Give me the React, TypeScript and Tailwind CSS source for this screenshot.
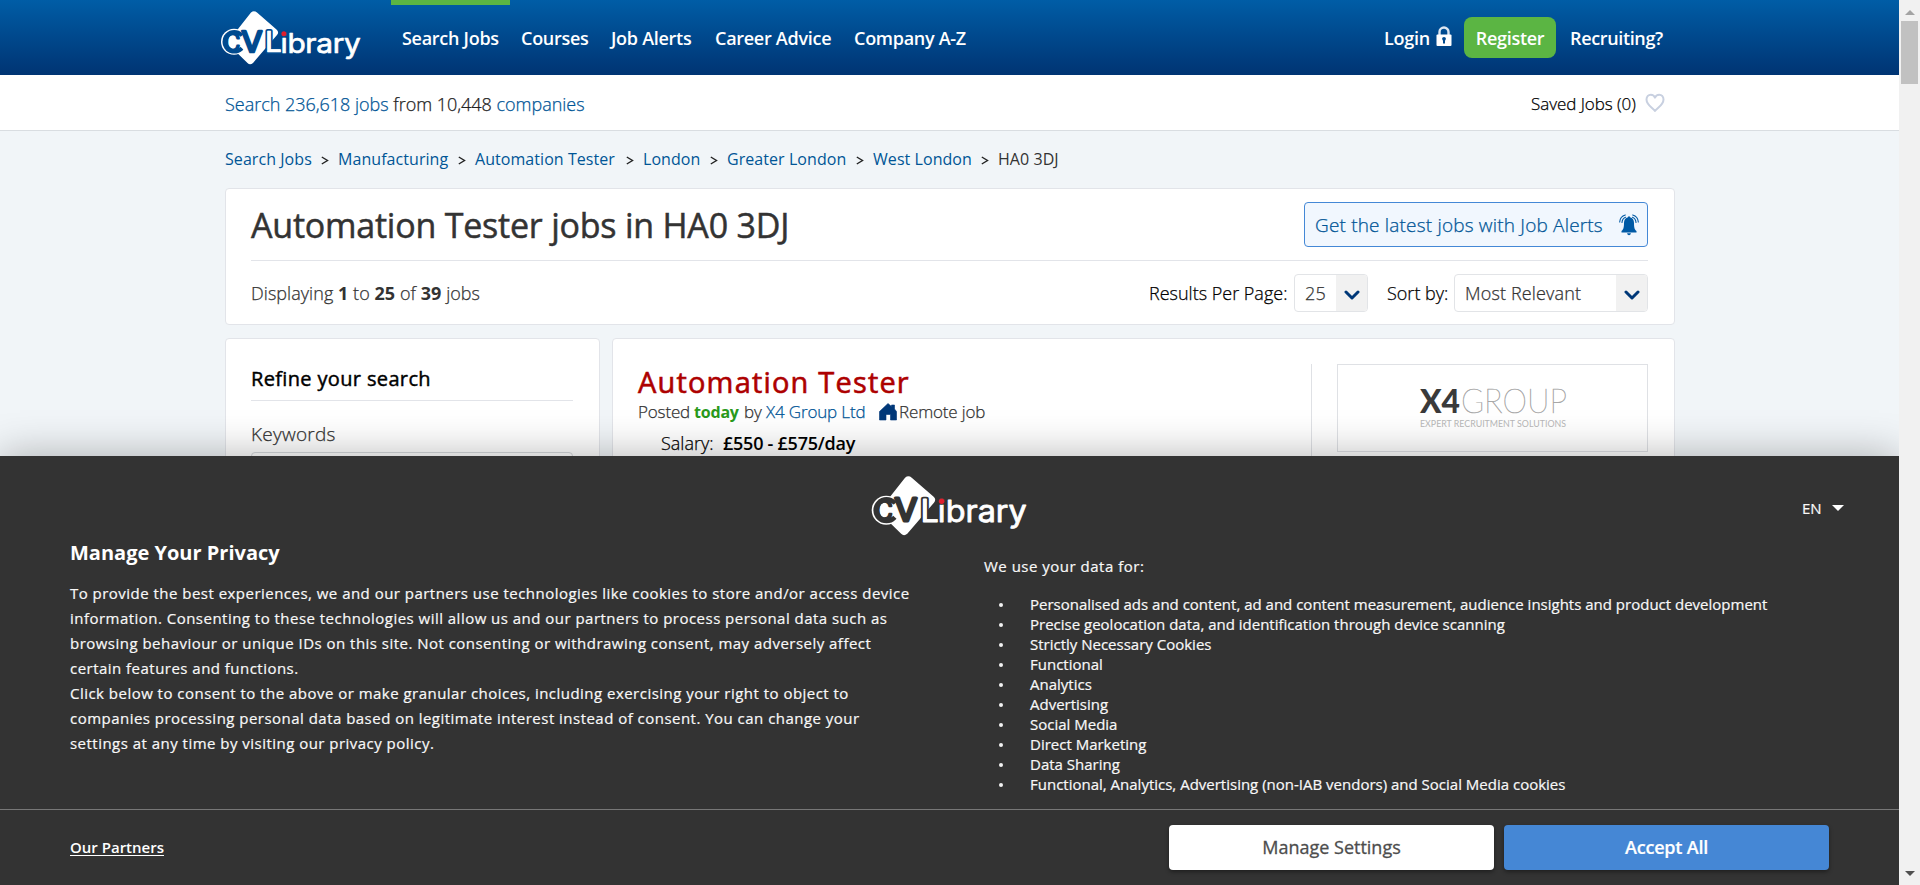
import React from "react";

const SANS = "font-['Open_Sans','Noto_Sans',sans-serif]";

function Logo({ className, ink }: { className: string; ink: string }) {
  return (
    <svg className={`overflow-visible ${className}`} viewBox="0 0 140 54" fill="none" aria-label="CV-Library">
      <path d="M30 1.500 Q33 -1 36 1.500 L55.500 18.500 Q58.500 21 56 24 L32 52 Q29 54.500 26.500 52 L6 32 Z" fill="#fff" />
      <circle cx="13" cy="30.800" r="13" fill="#fff" />
      <circle cx="13.300" cy="30.800" r="11.800" fill={ink} />
      <circle cx="14" cy="30.800" r="7.500" fill="#fff" />
      <path d="M14 30.800 L24 22 L28 31 L24 40 Z" fill="#fff" />
      <g fontFamily="Inter, 'Open Sans', sans-serif" strokeLinejoin="round" strokeLinecap="round" fontWeight="400">
        <text x="3" y="40.500" fontSize="27" textLength="16" lengthAdjust="spacingAndGlyphs" fill={ink} stroke={ink} strokeWidth="2">C</text>
        <text x="20.500" y="40.500" fontSize="28" textLength="20.500" lengthAdjust="spacingAndGlyphs" fill={ink} stroke={ink} strokeWidth="2.600">V</text>
        <text x="44" y="41" fontSize="28" textLength="16.500" lengthAdjust="spacingAndGlyphs" fill="#fff" stroke={ink} strokeWidth="4.200" paintOrder="stroke">L</text>
        <text x="44" y="41" fontSize="28" textLength="16.500" lengthAdjust="spacingAndGlyphs" fill="#fff" stroke="#fff" strokeWidth="0.700" aria-hidden="true">L</text>
        <text x="59.500" y="41.500" fontSize="27" textLength="80" lengthAdjust="spacingAndGlyphs" fill="#fff" stroke="#fff" strokeWidth="0.700">ibrary</text>
      </g>
      <circle cx="62.900" cy="22.800" r="3.100" fill={ink} />
      <circle cx="62.900" cy="22.800" r="2.500" fill="#e01f2d" />
    </svg>
  );
}

function Chevron() {
  return (
    <svg className="h-[12px] w-[16px]" viewBox="0 0 16 12" fill="none">
      <path d="M2 3 L8 9 L14 3" stroke="#003878" strokeWidth="3" strokeLinecap="round" strokeLinejoin="round" />
    </svg>
  );
}

function Header() {
  return (
    <header className="flex h-[75px] items-start bg-gradient-to-b from-[#005da6] to-[#003473] pl-[221px] text-[18px] font-semibold leading-[25px] tracking-[-0.28px] text-white">
      <Logo className="mt-[11px] h-[54px] w-[140px]" ink="#004a8f" />
      <nav className="ml-[30px] flex">
        <a className="h-[75px] w-[119px] border-t-[5px] border-[#5bb543] pl-[11px] pt-[21px] whitespace-nowrap">Search Jobs</a>
        <a className="w-[90px] pl-[11px] pt-[26px] whitespace-nowrap">Courses</a>
        <a className="w-[104px] pl-[11px] pt-[26px] whitespace-nowrap">Job Alerts</a>
        <a className="w-[139px] pl-[11px] pt-[26px] whitespace-nowrap">Career Advice</a>
        <a className="w-[130px] pl-[11px] pt-[26px] whitespace-nowrap">Company A-Z</a>
      </nav>
      <div className="ml-[411px] flex items-start">
        <span className="mt-[26px] w-[52px]">Login</span>
        <svg className="mt-[26px] h-[20px] w-[16px]" viewBox="0 0 16 20">
          <path d="M3.500 9 V6 a4.500 4.500 0 0 1 9 0 V9" fill="none" stroke="#dce6f1" strokeWidth="2.400" />
          <rect x="0.500" y="8.500" width="15" height="11.500" rx="1" fill="#fff" />
          <circle cx="8" cy="12.800" r="1.900" fill="#004a8f" />
          <rect x="7" y="13" width="2" height="4.500" fill="#004a8f" />
        </svg>
        <span className="ml-[12px] mt-[17px] flex h-[41px] w-[92px] items-center justify-center rounded-[8px] bg-[#5bb543] pt-px">Register</span>
        <span className="ml-[14px] mt-[26px] tracking-[-0.35px]">Recruiting?</span>
      </div>
    </header>
  );
}

function SubBar() {
  return (
    <div className="flex h-[56px] items-center border-b border-[#d9dde1] bg-white pl-[225px] text-[18px] font-light text-[#222] [-webkit-text-stroke:0.25px]">
      <div className="w-[1306px] pt-[3px] tracking-[-0.02px]">
        <span className="text-[#005596]">Search 236,618 jobs</span> from 10,448 <span className="text-[#005596]">companies</span>
      </div>
      <span className="w-[114px] pt-[3px] text-[17px] tracking-[-0.05px] text-black">Saved Jobs (0)</span>
      <svg className="mt-px h-[20px] w-[20px]" viewBox="0 0 20 20" fill="none">
        <path d="M10 18 C7.500 14.500 1.500 12 1.500 6.500 C1.500 3.500 3.500 1.700 5.800 1.700 C8 1.700 9.400 3 10 4.600 C10.600 3 12 1.700 14.200 1.700 C16.500 1.700 18.500 3.500 18.500 6.500 C18.500 12 12.500 14.500 10 18 Z" stroke="#c8d0e0" strokeWidth="2" strokeLinejoin="round" />
      </svg>
    </div>
  );
}

function Crumb({ w, children }: { w: string; children: React.ReactNode }) {
  return (
    <span className={`flex justify-between pr-[9px] ${w}`}>
      <span className="whitespace-nowrap text-[#005596]">{children}</span>
      <svg className="mt-[10px] h-[9px] w-[8px]" viewBox="0 0 8 9" fill="none">
        <path d="M0.800 1 L6.500 4.500 L0.800 8" stroke="#222" strokeWidth="1.400" />
      </svg>
    </span>
  );
}

function Select({ value, box }: { value: string; box: string }) {
  return (
    <span className={`flex h-[38px] overflow-hidden rounded-[4px] border border-[#e2e4e7] bg-white ${box}`}>
      <span className="flex flex-1 items-center whitespace-nowrap pl-[10px] tracking-[0.15px] text-[#333]">{value}</span>
      <span className="flex w-[31px] items-center justify-center bg-[#f1f1f1] pt-[3px]"><Chevron /></span>
    </span>
  );
}

function Bell() {
  return (
    <svg className="h-[22px] w-[20px]" viewBox="0 0 20 22" fill="none">
      <path d="M9 3.200 a1 1 0 0 1 2 0 C13.800 3.800 15 6 15 9 C15 13.500 15.600 15.500 17.500 17 V18.500 H2.500 V17 C4.400 15.500 5 13.500 5 9 C5 6 6.200 3.800 9 3.200 Z" fill="#005aa5" />
      <path d="M8 19.300 H12 Q11.500 21.300 10 21.300 Q8.500 21.300 8 19.300 Z" fill="#005aa5" />
      <path d="M0.700 8 Q1 2.500 6.300 1 M3 8.500 Q3.200 4.700 6.500 3.300 M19.300 8 Q19 2.500 13.700 1 M17 8.500 Q16.800 4.700 13.500 3.300" stroke="#005aa5" strokeWidth="1.100" strokeLinecap="round" />
    </svg>
  );
}

function SearchSummary() {
  return (
    <section className="h-[137px] w-[1450px] rounded-[4px] border border-[#e2e4e9] bg-white pl-[25px] pr-[26px]">
      <div className="flex h-[72px] items-start justify-between border-b border-[#e2e4e9]">
        <h1 className="pt-[14px] text-[34px] leading-[44px] tracking-[-0.22px] text-[#333] [-webkit-text-stroke:0.5px]">Automation Tester jobs in HA0 3DJ</h1>
        <button className="mt-[13px] flex h-[45px] w-[344px] items-center justify-between rounded-[4px] border border-[#4488d6] bg-[#f1f7fe] pl-[10px] pr-[8px] text-[19px] font-light tracking-[0.18px] text-[#005596] [-webkit-text-stroke:0.25px]">
          <span className="pt-px">Get the latest jobs with Job Alerts</span>
          <Bell />
        </button>
      </div>
      <div className="flex h-[64px] items-center text-[18px] font-light text-[#333] [-webkit-text-stroke:0.25px]">
        <span className="w-[898px] tracking-[0.05px]">
          Displaying <b className="font-bold [-webkit-text-stroke:0px]">1</b> to <b className="font-bold [-webkit-text-stroke:0px]">25</b> of <b className="font-bold [-webkit-text-stroke:0px]">39</b> jobs
        </span>
        <span className="w-[145px] whitespace-nowrap text-black">Results Per Page:</span>
        <Select value="25" box="w-[74px]" />
        <span className="w-[86px] pl-[19px] whitespace-nowrap text-black">Sort by:</span>
        <Select value="Most Relevant" box="w-[194px]" />
      </div>
    </section>
  );
}

function Refine() {
  return (
    <aside className="h-[400px] w-[375px] rounded-[4px] border border-[#e2e4e9] bg-white pl-[25px] pr-[26px]">
      <h2 className="h-[62px] border-b border-[#e2e4e9] pt-[25px] text-[20px] leading-[30px] tracking-[0.35px] text-black [-webkit-text-stroke:0.45px]">Refine your search</h2>
      <div className="mt-[18px] h-[33px] text-[19px] font-light leading-[30px] tracking-[0.25px] text-[#333] [-webkit-text-stroke:0.25px]">Keywords</div>
      <div className="h-[44px] rounded-[4px] border border-[#d5d8dc] bg-white" />
    </aside>
  );
}

function JobCard() {
  return (
    <article className="flex h-[400px] w-[1063px] rounded-[4px] border border-[#e2e4e9] bg-white">
      <div className="mt-[25px] w-[699px] border-r border-[#dfe1e5] pl-[25px]">
        <h2 className="-mt-[1px] h-[36px] text-[29px] leading-[38px] tracking-[1.18px] text-[#ad0000] [-webkit-text-stroke:0.6px]">Automation Tester</h2>
        <div className="flex h-[26px] items-center whitespace-nowrap text-[17px] font-light tracking-[-0.15px] text-[#333] [-webkit-text-stroke:0.25px]">
          <span className="w-[56px]">Posted</span>
          <b className="w-[50px] text-[16px] font-bold tracking-[-0.2px] text-[#2a9a1c] [-webkit-text-stroke:0px]">today</b>
          <span className="w-[22px]">by</span>
          <span className="w-[113px] text-[#005596]">X4 Group Ltd</span>
          <svg className="mr-[2px] h-[18px] w-[18px]" viewBox="0 0 18 18">
            <path d="M9 0.500 L12.500 3.500 V2 H15.500 V6 L17.500 8.500 V17 H11.500 V11.500 H7 V17 H0.500 V8.500 Z" fill="#003878" stroke="#003878" strokeWidth="0.600" strokeLinejoin="round" />
          </svg>
          <span>Remote job</span>
        </div>
        <div className="flex h-[36px] items-center pl-[23px] text-[18px] font-light text-black [-webkit-text-stroke:0.25px]">
          <span className="w-[62px]">Salary:</span>
          <b className="font-semibold tracking-[-0.25px] [-webkit-text-stroke:0px]">£550 - £575/day</b>
        </div>
      </div>
      <div className="ml-[25px] mt-[25px] h-[88px] w-[311px] border border-[#dfe1e5]">
        <svg className="ml-[81px] mt-[23px] h-[42px] w-[150px] overflow-visible" viewBox="0 0 150 42">
          <text x="1" y="25" fontFamily="Lato, sans-serif" fontSize="33" fontWeight="900" textLength="40" lengthAdjust="spacingAndGlyphs" fill="#3a3a3a">X4</text>
          <text x="42" y="25" fontFamily="Lato, sans-serif" fontSize="34" fontWeight="200" textLength="106" lengthAdjust="spacingAndGlyphs" fill="#a8a8a8" stroke="#a8a8a8" strokeWidth="0.500">GROUP</text>
          <text x="1" y="38.500" fontFamily="Lato, sans-serif" fontSize="10" fontWeight="400" textLength="146" lengthAdjust="spacingAndGlyphs" fill="#b8b8b8">EXPERT RECRUITMENT SOLUTIONS</text>
        </svg>
      </div>
    </article>
  );
}

const purposes = [
  "Personalised ads and content, ad and content measurement, audience insights and product development",
  "Precise geolocation data, and identification through device scanning",
  "Strictly Necessary Cookies",
  "Functional",
  "Analytics",
  "Advertising",
  "Social Media",
  "Direct Marketing",
  "Data Sharing",
  "Functional, Analytics, Advertising (non-IAB vendors) and Social Media cookies",
];

function Consent() {
  return (
    <div className="absolute bottom-0 left-0 flex h-[429px] w-[1899px] flex-col bg-[#333] text-[15px] text-[#f8f8f8] shadow-[0_0_40px_rgba(0,0,0,0.3)]">
      <div className="flex h-[84px] items-start pl-[871px] pt-[20px]">
        <Logo className="h-[60px] w-[157px]" ink="#333333" />
        <div className="ml-[774px] mt-[22px] flex items-center leading-[20px]">
          <span className="w-[30px] text-[15px] [-webkit-text-stroke:0.2px]">EN</span>
          <svg className="h-[6px] w-[12px]" viewBox="0 0 12 6"><path d="M0 0 H12 L6 6 Z" fill="#fff" /></svg>
        </div>
      </div>
      <div className="flex h-[269px] pl-[70px]">
        <div className="w-[914px]">
          <h2 className="text-[20px] font-bold leading-[26px] text-white">Manage Your Privacy</h2>
          <div className="mt-[15px] whitespace-nowrap leading-[25px] tracking-[0.475px] [-webkit-text-stroke:0.2px]">
            <div>To provide the best experiences, we and our partners use technologies like cookies to store and/or access device</div>
            <div>information. Consenting to these technologies will allow us and our partners to process personal data such as</div>
            <div>browsing behaviour or unique IDs on this site. Not consenting or withdrawing consent, may adversely affect</div>
            <div>certain features and functions.</div>
            <div>Click below to consent to the above or make granular choices, including exercising your right to object to</div>
            <div>companies processing personal data based on legitimate interest instead of consent. You can change your</div>
            <div>settings at any time by visiting our privacy policy.</div>
          </div>
        </div>
        <div className="pt-[16px] [-webkit-text-stroke:0.2px]">
          <div className="leading-[20px] tracking-[0.5px]">We use your data for:</div>
          <ul className="mt-[18px] leading-[20px]">
            {purposes.map((p) => (
              <li key={p} className="flex items-center">
                <span className="ml-[15px] mr-[27px] mt-[2px] h-[4px] w-[4px] rounded-full bg-[#f2f2f2]" />
                <span className="whitespace-nowrap">{p}</span>
              </li>
            ))}
          </ul>
        </div>
      </div>
      <div className="flex h-[76px] items-start border-t border-[#777] pl-[70px] pt-[15px]">
        <span className="w-[1099px] pt-[12px] font-semibold leading-[20px] text-white underline underline-offset-2">Our Partners</span>
        <button className="h-[45px] w-[325px] rounded-[4px] bg-white text-[18px] text-[#4d4d4d] shadow-[0_2px_4px_rgba(0,0,0,0.4)] [-webkit-text-stroke:0.3px]">Manage Settings</button>
        <button className="ml-[10px] h-[45px] w-[325px] rounded-[4px] bg-[#4587d5] text-[18px] font-semibold tracking-[-0.2px] text-white shadow-[0_2px_4px_rgba(0,0,0,0.4)] [-webkit-text-stroke:0.2px]">Accept All</button>
      </div>
    </div>
  );
}

function Scrollbar() {
  return (
    <div className="relative z-10 flex h-[885px] w-[21px] flex-col items-center bg-[#f1f1f1]">
      <svg className="mt-[10px] h-[5px] w-[10px]" viewBox="0 0 10 5"><path d="M0 5 L5 0 L10 5 Z" fill="#a3a3a3" /></svg>
      <div className="mt-[6px] h-[63px] w-[17px] bg-[#c1c1c1]" />
      <svg className="mb-[9px] mt-auto h-[5px] w-[10px]" viewBox="0 0 10 5"><path d="M0 0 L5 5 L10 0 Z" fill="#505050" /></svg>
    </div>
  );
}

export default function App() {
  return (
    <div className={`relative flex h-[885px] w-[1920px] overflow-hidden bg-[#f1f5f8] ${SANS}`}>
      <div className="h-[885px] w-[1899px] overflow-hidden">
        <Header />
        <SubBar />
        <div className="flex h-[57px] pl-[225px] pt-[15px] text-[16px] leading-[26px] tracking-[0.06px] text-[#333]">
          <Crumb w="w-[113px]">Search Jobs</Crumb>
          <Crumb w="w-[137px]">Manufacturing</Crumb>
          <Crumb w="w-[168px]">Automation Tester</Crumb>
          <Crumb w="w-[84px]">London</Crumb>
          <Crumb w="w-[146px]">Greater London</Crumb>
          <Crumb w="w-[125px]">West London</Crumb>
          <span>HA0 3DJ</span>
        </div>
        <main className="flex flex-col gap-[13px] pl-[225px]">
          <SearchSummary />
          <div className="flex gap-[12px]">
            <Refine />
            <JobCard />
          </div>
        </main>
      </div>
      <Scrollbar />
      <Consent />
    </div>
  );
}
